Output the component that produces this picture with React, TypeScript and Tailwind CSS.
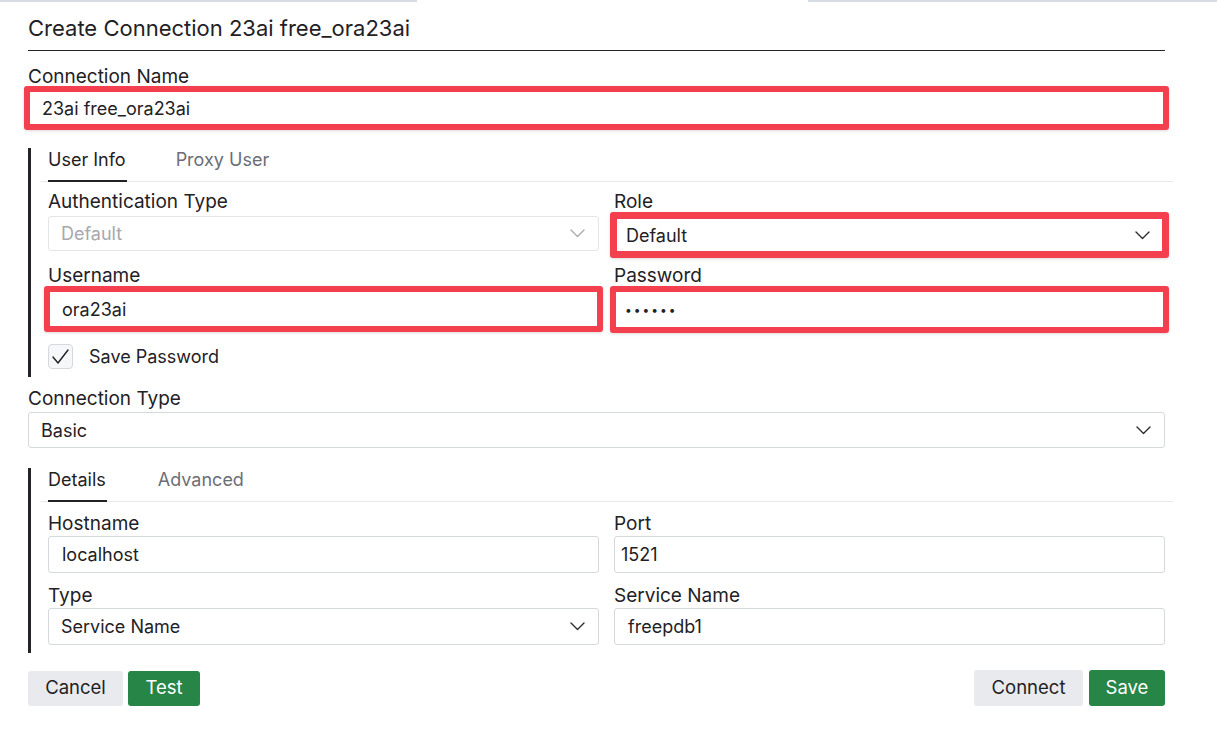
import React from "react";

const Chevron = ({ color = "#2b2d31" }: { color?: string }) => (
  <svg width="15" height="9" viewBox="0 0 15 9" fill="none">
    <polyline points="1,1 7.5,7.5 14,1" stroke={color} strokeWidth="1.4" strokeLinecap="round" strokeLinejoin="round" />
  </svg>
);

const Label = ({ children, className = "" }: { children: React.ReactNode; className?: string }) => (
  <div className={`text-[19px] leading-[22px] text-[#1f2125] ${className}`}>{children}</div>
);

const Tabs = ({ a, b, bLeft }: { a: string; b: string; bLeft: string }) => (
  <div className="flex h-[34px] border-b border-[#e6e8eb] pl-[7px] w-[1132px]">
    <div className="border-b-2 border-[#1f2125] pr-[1px] text-[18px] leading-[22px] pt-[1px] text-[#1f2125] h-[34px] -mb-px">{a}</div>
    <div className={`${bLeft} text-[18px] leading-[22px] pt-[1px] text-[#6b6e75]`}>{b}</div>
  </div>
);

const Input = ({ value, className = "" }: { value: string; className?: string }) => (
  <div className={`h-[37px] border border-[#d5d8dd] rounded-[3px] bg-white flex items-center px-[13px] text-[18px] text-[#1f2125] ${className}`}>{value}</div>
);

export default function App() {
  return (
    <div className="w-[1217px] h-[735px] bg-white overflow-hidden" style={{ fontFamily: "Inter, 'Noto Sans', sans-serif" }}>
      <div className="flex h-[2px]">
        <div className="w-[417px] bg-[#d6dce4]" />
        <div className="flex-1" />
        <div className="w-[409px] bg-[#d6dce4]" />
      </div>
      <div className="ml-[28px] w-[1137px]">
        <div className="pt-[13px] pb-[8px] border-b border-[#222428] text-[22px] leading-[27px] text-[#1f2125]">
          Create Connection 23ai free_ora23ai
        </div>
        <Label className="mt-[15px]">Connection Name</Label>
        <div className="-mx-[4px] mt-[-2px] h-[44px] border-[6px] border-[#f43f4e] rounded-[3px] bg-white flex items-center px-[12px] text-[18px] text-[#1f2125] shadow-[0_1px_3px_rgba(0,0,0,0.15)]">
          23ai free_ora23ai
        </div>

        {/* User info section */}
        <div className="mt-[18px] w-[1144px] border-l-[3px] border-[#222428] pl-[10px] pb-[8px]">
          <Tabs a="User Info" b="Proxy User" bLeft="ml-[49px]" />
          <div className="px-[7px] pt-[8px] grid grid-cols-2 gap-x-[15px] w-[1131px]">
            <div>
              <Label className="pt-[1px]">Authentication Type</Label>
              <div className="mt-[3px] h-[35px] border border-[#e3e5e8] rounded-[3px] bg-white flex items-center justify-between pl-[12px] pr-[13px] text-[18px] text-[#a6a8ab]">
                <span>Default</span>
                <Chevron color="#a9abae" />
              </div>
            </div>
            <div>
              <Label className="pt-[1px]">Role</Label>
              <div className="-mx-[4px] mt-[-1px] h-[46px] border-[7px] border-[#f43f4e] rounded-[3px] bg-white flex items-center justify-between pl-[9px] pr-[12px] text-[18px] text-[#1f2125] shadow-[0_1px_3px_rgba(0,0,0,0.15)]">
                <span>Default</span>
                <Chevron />
              </div>
            </div>
            <div className="mt-[6px]">
              <Label className="pt-[1px]">Username</Label>
              <div className="-mx-[4px] mt-[-1px] h-[46px] border-[6px] border-[#f43f4e] rounded-[3px] bg-white flex items-center pl-[12px] text-[18px] text-[#1f2125] shadow-[0_1px_3px_rgba(0,0,0,0.15)]">
                ora23ai
              </div>
            </div>
            <div className="mt-[6px]">
              <Label className="pt-[1px]">Password</Label>
              <div className="-mx-[4px] mt-[-1px] h-[47px] border-[6px] border-[#f43f4e] rounded-[3px] bg-white flex items-center pl-[9px] text-[12px] tracking-[2px] text-[#1f2125] shadow-[0_1px_3px_rgba(0,0,0,0.15)]">
                ••••••
              </div>
            </div>
          </div>
          <div className="px-[7px] mt-[11px] flex items-center">
            <div className="w-[25px] h-[25px] border border-[#d5d8dd] rounded-[4px] bg-[#f6f7f9] flex items-center justify-center">
              <svg width="17" height="15" viewBox="0 0 17 15" fill="none">
                <polyline points="1,8 6,14 16,1" stroke="#1f2125" strokeWidth="1.4" strokeLinejoin="round" strokeLinecap="round" />
              </svg>
            </div>
            <span className="ml-[16px] text-[18px] leading-[22px] text-[#1f2125]">Save Password</span>
          </div>
        </div>

        <Label className="mt-[11px]">Connection Type</Label>
        <div className="mt-[2px] h-[36px] border border-[#d5d8dd] rounded-[3px] bg-white flex items-center justify-between pl-[12px] pr-[13px] text-[18px] text-[#1f2125]">
          <span>Basic</span>
          <Chevron />
        </div>

        {/* Details section */}
        <div className="mt-[20px] w-[1144px] border-l-[3px] border-[#222428] pl-[10px] pb-[8px]">
          <Tabs a="Details" b="Advanced" bLeft="ml-[51px]" />
          <div className="px-[7px] pt-[10px] grid grid-cols-2 gap-x-[15px] gap-y-[11px] w-[1131px]">
            <div>
              <Label className="pt-[1px]">Hostname</Label>
              <Input value="localhost" className="mt-[1px] h-[36px]" />
            </div>
            <div>
              <Label className="pt-[1px]">Port</Label>
              <Input value="1521" className="mt-[1px] h-[36px] !px-[6px]" />
            </div>
            <div>
              <Label className="pt-[1px]">Type</Label>
              <div className="mt-[1px] h-[37px] border border-[#d5d8dd] rounded-[3px] bg-white flex items-center justify-between pl-[12px] pr-[13px] text-[18px] text-[#1f2125]">
                <span>Service Name</span>
                <Chevron />
              </div>
            </div>
            <div>
              <Label className="pt-[1px]">Service Name</Label>
              <Input value="freepdb1" className="mt-[1px] h-[37px]" />
            </div>
          </div>
        </div>

        <div className="mt-[17px] flex items-center">
          <button className="w-[95px] h-[35px] rounded-[3px] bg-[#e9eaee] text-[18.5px] text-[#1f2125]">Cancel</button>
          <button className="ml-[5px] w-[72px] h-[35px] rounded-[3px] bg-[#268547] text-[18.5px] text-white">Test</button>
          <div className="flex-1" />
          <button className="w-[109px] h-[36px] rounded-[3px] bg-[#e9eaee] text-[18.5px] text-[#1f2125]">Connect</button>
          <button className="ml-[6px] w-[76px] h-[36px] rounded-[3px] bg-[#268547] text-[18.5px] text-white">Save</button>
        </div>
      </div>
    </div>
  );
}
